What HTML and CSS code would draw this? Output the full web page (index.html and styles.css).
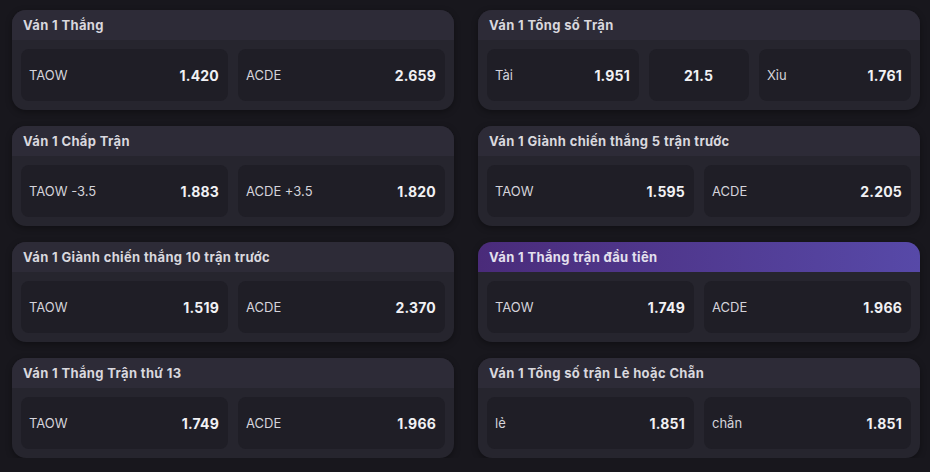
FILE: index.html
```html
<!DOCTYPE html>
<html lang="vi">
<head>
<meta charset="utf-8">
<link rel="stylesheet" href="styles.css">
</head>
<body>
<div class="grid">
  <div class="card">
    <div class="card-head">Ván 1 Thắng</div>
    <div class="card-body">
      <div class="opt"><span class="lbl">TAOW</span><span class="odd">1.420</span></div>
      <div class="opt"><span class="lbl">ACDE</span><span class="odd">2.659</span></div>
    </div>
  </div>
  <div class="card">
    <div class="card-head">Ván 1 Tổng số Trận</div>
    <div class="card-body three">
      <div class="opt"><span class="lbl">Tài</span><span class="odd">1.951</span></div>
      <div class="opt mid"><span class="odd">21.5</span></div>
      <div class="opt"><span class="lbl">Xỉu</span><span class="odd">1.761</span></div>
    </div>
  </div>
  <div class="card">
    <div class="card-head">Ván 1 Chấp Trận</div>
    <div class="card-body">
      <div class="opt"><span class="lbl">TAOW -3.5</span><span class="odd">1.883</span></div>
      <div class="opt"><span class="lbl">ACDE +3.5</span><span class="odd">1.820</span></div>
    </div>
  </div>
  <div class="card">
    <div class="card-head">Ván 1 Giành chiến thắng 5 trận trước</div>
    <div class="card-body">
      <div class="opt"><span class="lbl">TAOW</span><span class="odd">1.595</span></div>
      <div class="opt"><span class="lbl">ACDE</span><span class="odd">2.205</span></div>
    </div>
  </div>
  <div class="card">
    <div class="card-head">Ván 1 Giành chiến thắng 10 trận trước</div>
    <div class="card-body">
      <div class="opt"><span class="lbl">TAOW</span><span class="odd">1.519</span></div>
      <div class="opt"><span class="lbl">ACDE</span><span class="odd">2.370</span></div>
    </div>
  </div>
  <div class="card">
    <div class="card-head active">Ván 1 Thắng trận đầu tiên</div>
    <div class="card-body">
      <div class="opt"><span class="lbl">TAOW</span><span class="odd">1.749</span></div>
      <div class="opt"><span class="lbl">ACDE</span><span class="odd">1.966</span></div>
    </div>
  </div>
  <div class="card">
    <div class="card-head">Ván 1 Thắng Trận thứ 13</div>
    <div class="card-body">
      <div class="opt"><span class="lbl">TAOW</span><span class="odd">1.749</span></div>
      <div class="opt"><span class="lbl">ACDE</span><span class="odd">1.966</span></div>
    </div>
  </div>
  <div class="card">
    <div class="card-head">Ván 1 Tổng số trận Lẻ hoặc Chẵn</div>
    <div class="card-body">
      <div class="opt"><span class="lbl">lẻ</span><span class="odd">1.851</span></div>
      <div class="opt"><span class="lbl">chẵn</span><span class="odd">1.851</span></div>
    </div>
  </div>
</div>
</body>
</html>
```
FILE: styles.css
```css
html, body {
  margin: 0;
  padding: 0;
  background: #18171d;
  font-family: "Inter", "Noto Sans", sans-serif;
}
.grid {
  display: grid;
  grid-template-columns: 442px 442px;
  column-gap: 24px;
  row-gap: 16px;
  padding: 10px 10px 0 12px;
}
.card {
  height: 100px;
  border-radius: 14px;
  overflow: hidden;
  background: #26252e;
  box-shadow: 0 2px 6px rgba(0,0,0,0.35);
}
.card-head {
  height: 30px;
  display: flex;
  align-items: center;
  padding-left: 11px;
  background: #2d2b37;
  color: #d9d8de;
  font-size: 13px;
  font-weight: 700;
  letter-spacing: 0.35px;
}
.card-head.active {
  background: linear-gradient(90deg, #4a2b7a 0%, #5749a8 100%);
  color: #e4e0ee;
}
.card-body {
  display: flex;
  gap: 10px;
  padding: 9px 9px 8px;
}
.card-body.three {
  display: grid;
  grid-template-columns: 1fr 100px 1fr;
}
.opt {
  flex: 1;
  height: 52px;
  box-sizing: border-box;
  border-radius: 8px;
  background: #1f1e26;
  display: flex;
  align-items: center;
  justify-content: space-between;
  padding: 0 9px 0 8px;
}
.opt.mid {
  justify-content: center;
}
.lbl {
  color: #d4d3da;
  font-size: 13px;
}
.odd {
  color: #f1f1f4;
  font-size: 14px;
  font-weight: 700;
  letter-spacing: 0.2px;
}
```
